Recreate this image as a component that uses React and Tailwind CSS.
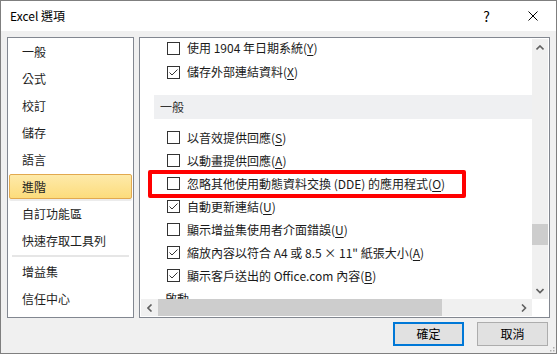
import React from 'react'

const navItems = ['一般', '公式', '校訂', '儲存', '語言', '進階', '自訂功能區', '快速存取工具列']
const navTail = ['增益集', '信任中心']

function Key({ children }) {
  return <span className="underline underline-offset-2">{children}</span>
}

function CheckBox({ checked }) {
  return (
    <div className="w-[13px] h-[13px] border border-[#333333] bg-white flex items-center justify-center shrink-0">
      {checked && (
        <svg width="11" height="11" viewBox="0 0 11 11">
          <polyline points="1.5,5.5 4,8 9.5,2.5" fill="none" stroke="#333333" strokeWidth="1" />
        </svg>
      )}
    </div>
  )
}

function Row({ checked, label, k, h = 'h-[23px]', children }) {
  return (
    <div className={`relative flex items-center ${h} pl-[26px]`}>
      <CheckBox checked={checked} />
      <span className="ml-[7px] whitespace-nowrap text-[12px] leading-none text-[#1a1a1a]">
        {label}(<Key>{k}</Key>)
      </span>
      {children}
    </div>
  )
}

function Chevron({ dir }) {
  const pts = {
    up: '0.5,4.5 4,1 7.5,4.5',
    down: '0.5,1 4,4.5 7.5,1',
    left: '4.5,0.5 1,4 4.5,7.5',
    right: '1,0.5 4.5,4 1,7.5',
  }[dir]
  const vertical = dir === 'up' || dir === 'down'
  return (
    <svg width={vertical ? 8 : 6} height={vertical ? 6 : 8} viewBox={vertical ? '0 0 8 6' : '0 0 6 8'}>
      <polyline points={pts} fill="none" stroke="#606060" strokeWidth="1.6" />
    </svg>
  )
}

function NavItem({ label, selected }) {
  return (
    <div className="h-[27px] px-[1px] py-[1px]">
      <div
        className={`h-full flex items-center pl-[12px] rounded-[2px] border text-[12px] leading-none text-[#1e1e1e] ${
          selected
            ? 'border-[#e2a94f] bg-gradient-to-b from-[#feeaa9] to-[#fcdc7b] shadow-[0_2px_0_#ececec]'
            : 'border-transparent'
        }`}
      >
        {label}
      </div>
    </div>
  )
}

export default function App() {
  return (
    <div
      className="w-[557px] h-[354px] border border-[#7f7f7f] bg-[#f0f0f0] flex flex-col overflow-hidden"
      style={{ fontFamily: '"Noto Sans CJK TC", "Noto Sans", sans-serif' }}
    >
      {/* Title bar */}
      <div className="h-[30px] bg-white flex items-center pl-[9px] shrink-0">
        <span className="text-[12px] leading-none text-black">Excel 選項</span>
        <div className="flex-1" />
        <span className="text-[14px] leading-none text-black mr-[38px]">?</span>
        <svg width="10" height="10" viewBox="0 0 10 10" className="mr-[18px]">
          <path d="M0.5 0.5 L9.5 9.5 M9.5 0.5 L0.5 9.5" stroke="#000" strokeWidth="1" />
        </svg>
      </div>

      {/* Body */}
      <div className="flex-1 flex flex-col px-[6px] pt-[6px]">
        <div className="flex gap-[5px] h-[281px]">
          {/* Left nav */}
          <div className="w-[127px] border border-[#828790] bg-white flex flex-col">
            {navItems.map((n) => (
              <NavItem key={n} label={n} selected={n === '進階'} />
            ))}
            <div className="mx-[4px] my-[1px] h-[2px] bg-[#e6e6e6]" />
            {navTail.map((n) => (
              <NavItem key={n} label={n} />
            ))}
          </div>

          {/* Right panel */}
          <div className="w-[411px] border border-[#828790] bg-white p-[1px] flex flex-col">
            <div className="flex flex-1 min-h-0">
              <div className="flex-1 overflow-hidden">
                <div className="-mt-[3px]">
                  <Row checked={false} label="使用 1904 年日期系統" k="Y" h="h-[24px]" />
                  <Row checked label="儲存外部連結資料" k="X" h="h-[24px]" />
                  <div className="mt-[11px] ml-[13px] h-[24px] bg-[#eff0f2] flex items-center pl-[6px] text-[12px] leading-none text-[#333333]">
                    一般
                  </div>
                  <div className="mt-[7px]">
                    <Row checked={false} label="以音效提供回應" k="S" />
                    <Row checked={false} label="以動畫提供回應" k="A" />
                    <Row checked={false} label="忽略其他使用動態資料交換 (DDE) 的應用程式" k="O">
                      <div className="absolute left-[7px] top-[-2px] w-[318px] h-[28px] border-[4px] border-[#ff0000] rounded-[2px]" />
                    </Row>
                    <Row checked label="自動更新連結" k="U" />
                    <Row checked={false} label="顯示增益集使用者介面錯誤" k="U" />
                    <Row checked label={'縮放內容以符合 A4 或 8.5 × 11" 紙張大小'} k="A" />
                    <Row checked label="顯示客戶送出的 Office.com 內容" k="B" />
                  </div>
                  <div className="h-[24px] flex items-center pl-[24px] text-[12px] leading-none text-[#1a1a1a]">
                    啟動
                  </div>
                </div>
              </div>
              {/* Vertical scrollbar */}
              <div className="w-[16px] bg-[#f0f0f0] flex flex-col">
                <div className="h-[17px] flex items-center justify-center">
                  <Chevron dir="up" />
                </div>
                <div className="h-[168px]" />
                <div className="h-[21px] bg-[#cdcdcd]" />
                <div className="flex-1" />
                <div className="h-[17px] flex items-center justify-center">
                  <Chevron dir="down" />
                </div>
              </div>
            </div>
            {/* Horizontal scrollbar */}
            <div className="h-[17px] flex">
              <div className="flex-1 bg-[#f0f0f0] flex">
                <div className="w-[17px] flex items-center justify-center">
                  <Chevron dir="left" />
                </div>
                <div className="w-[284px] bg-[#cdcdcd]" />
                <div className="flex-1" />
                <div className="w-[17px] flex items-center justify-center">
                  <Chevron dir="right" />
                </div>
              </div>
              <div className="w-[16px] bg-white" />
            </div>
          </div>
        </div>

        {/* Buttons */}
        <div className="flex justify-end gap-[13px] mt-[4px] pr-[2px]">
          <button className="w-[71px] h-[24px] bg-[#e1e1e1] border-2 border-[#0078d7] text-[12px] leading-none text-black">
            確定
          </button>
          <button className="w-[71px] h-[24px] bg-[#e1e1e1] border border-[#adadad] text-[12px] leading-none text-black">
            取消
          </button>
        </div>
        <div className="flex-1 flex justify-end items-end -mr-[6px]">
          <svg width="9" height="9" viewBox="0 0 9 9" className="mb-[1px] mr-[1px]">
            {[[7, 1], [4, 4], [7, 4], [1, 7], [4, 7], [7, 7]].map(([x, y]) => (
              <rect key={`${x}-${y}`} x={x} y={y} width="1.5" height="1.5" fill="#b0b0b0" />
            ))}
          </svg>
        </div>
      </div>
    </div>
  )
}
